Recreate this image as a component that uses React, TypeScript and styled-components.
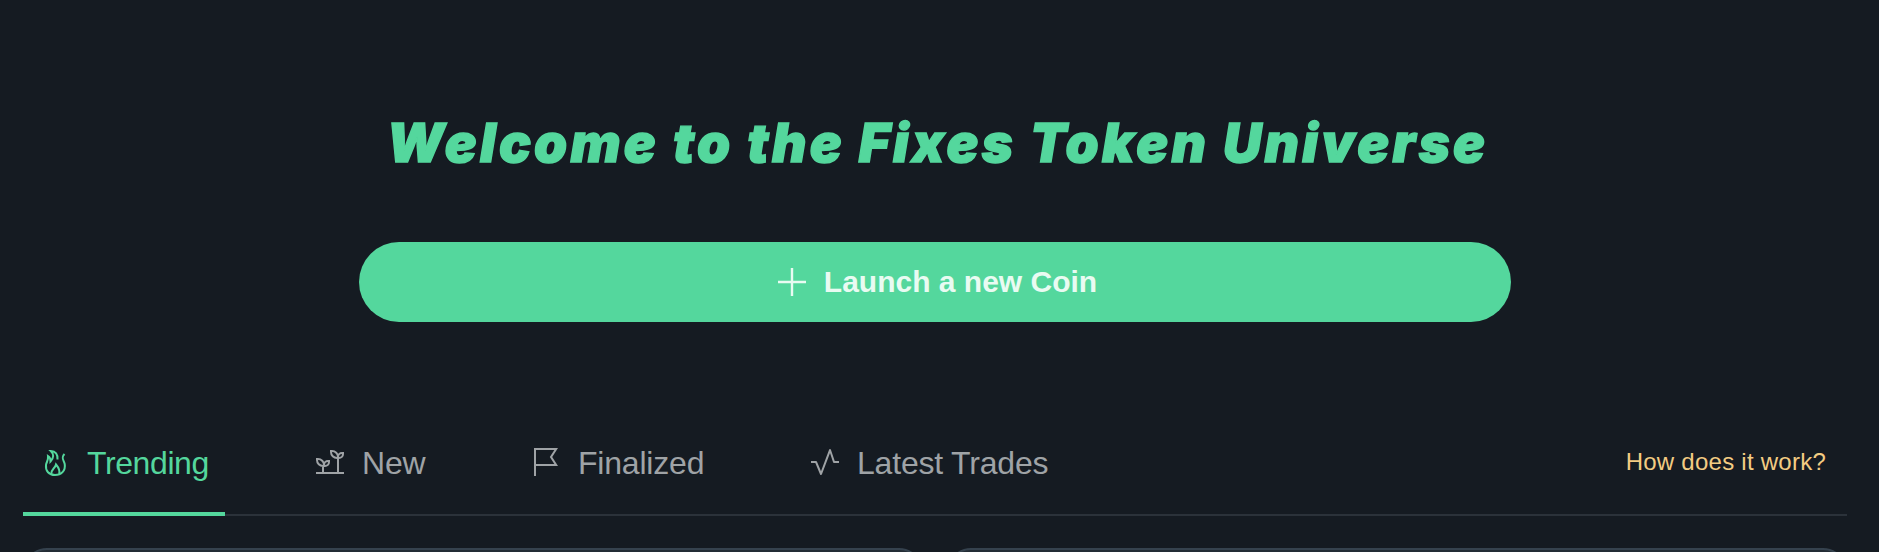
import React from "react";
import styled, { createGlobalStyle } from "styled-components";

const GlobalStyle = createGlobalStyle`
  * {
    box-sizing: border-box;
  }
  body {
    margin: 0;
    background: #151b22;
    font-family: "Liberation Sans", Arial, sans-serif;
  }
`;

const Page = styled.main`
  height: 552px;
  overflow: hidden;
  background: #151b22;
`;

const Hero = styled.section`
  display: flex;
  flex-direction: column;
  align-items: center;
  padding-right: 9px;
`;

const Title = styled.h1`
  margin: 107px 0 0 5px;
  height: 72px;
  line-height: 72px;
  font-family: Inter, sans-serif;
  font-size: 53px;
  font-weight: 900;
  font-style: italic;
  letter-spacing: 3.3px;
  white-space: nowrap;
  color: #54d79d;
  -webkit-text-stroke: 1.4px #54d79d;
`;

const LaunchButton = styled.button`
  display: flex;
  justify-content: center;
  align-items: center;
  gap: 16px;
  width: 1152px;
  height: 80px;
  margin-top: 63px;
  padding: 0 0 0 3px;
  border: 0;
  border-radius: 40px;
  background: #54d79d;
  color: #e9fbf2;
  font-family: inherit;
  font-size: 30px;
  font-weight: 700;
`;

const Icon = styled.svg`
  display: block;
  flex: none;
  width: 32px;
  height: 32px;
  fill: currentColor;
`;

const TabBar = styled.nav`
  display: flex;
  height: 96px;
  margin: 98px 32px 0 23px;
  box-shadow: inset 0 -2px #2b323a;
`;

const Tab = styled.button<{ $active?: boolean; $width: number; $gap?: number }>`
  display: flex;
  align-items: center;
  gap: 16px;
  flex: none;
  width: ${({ $width }) => $width}px;
  margin-right: ${({ $gap = 73 }) => $gap}px;
  padding: 0 0 6px 16px;
  border: 0;
  border-bottom: 4px solid ${({ $active }) => ($active ? "#54d79d" : "transparent")};
  background: none;
  color: ${({ $active }) => ($active ? "#54d79d" : "#9fa3a6")};
  font-family: inherit;
  font-size: 32px;
  letter-spacing: ${({ $active }) => ($active ? "-0.4px" : "-0.2px")};
  white-space: nowrap;

  ${Icon} {
    margin-bottom: 2px;
  }
`;

const HelpLink = styled.a`
  margin-left: auto;
  padding: 28px 21px 0 0;
  font-size: 24px;
  letter-spacing: 0.25px;
  line-height: 28px;
  color: #f3cc82;
`;

const Cards = styled.div`
  display: grid;
  grid-template-columns: 1fr 1fr;
  gap: 24px;
  margin: 32px 32px 0 23px;
`;

const Card = styled.article`
  height: 240px;
  border: 2px solid #35424e;
  border-radius: 24px;
  background: #232c35;
`;

const icons = {
  add: "M17.200 14.800V2h-2.400v12.800H2v2.400h12.800V30h2.400V17.200H30v-2.400z",
  flag: "M6 30H4V2h24l-5.8 9L28 20H6zm0-12h18.33L19.8 11l4.53-7H6z",
  activity:
    "M12 29a1 1 0 0 1-.92-.62L6.33 17H2v-2h5a1 1 0 0 1 .92.62L12 25.28l8.06-21.63A1 1 0 0 1 21 3a1 1 0 0 1 .93.68L25.72 15H30v2h-5a1 1 0 0 1-.95-.68L21 7l-8.06 21.35A1 1 0 0 1 12 29z",
};

const Fire = () => (
  <Icon viewBox="0 0 32 32">
    <g fill="none" stroke="currentColor" strokeWidth="2">
      <path d="M25.500 8c-4 4-.5 6.500.2 10 1.200 7-3.700 11-9.700 11s-9.700-4-9-10c.4-3 2.500-4.500 2-9 2 1.200 2.600 3 2.500 5.500 3.500-3.500 3.500-7.500.3-10.500 4.700 0 7.200 3.500 6.700 8.500" />
      <path d="M12.500 28c-1-4.500 3.500-5 4.500-9.500 2.500 3 4.500 6 3 9.500" />
    </g>
  </Icon>
);

const Sprouts = () => (
  <Icon viewBox="0 0 32 32">
    <path d="M2 26h28v2H2z" />
    <g fill="none" stroke="currentColor" strokeWidth="2">
      <path d="M9 27v-8M9 20a6 6 0 0 1-6-6v-1h1a6 6 0 0 1 6 6v1zM10 20v-1a4 4 0 0 1 4-4h1v1a4 4 0 0 1-4 4z" />
      <path d="M24 27V11M24 12h-1a6 6 0 0 1-6-6V5h1a6 6 0 0 1 6 6zM24 12v-1a4 4 0 0 1 4-4h1v1a4 4 0 0 1-4 4z" />
    </g>
  </Icon>
);

const Glyph = ({ name }: { name: keyof typeof icons }) => (
  <Icon viewBox="0 0 32 32">
    <path d={icons[name]} />
  </Icon>
);

const App = () => {
  return (
    <Page>
      <GlobalStyle />
      <Hero>
        <Title>Welcome to the Fixes Token Universe</Title>
        <LaunchButton>
          <Glyph name="add" />
          Launch a new Coin
        </LaunchButton>
      </Hero>
      <TabBar>
        <Tab $active $width={202}>
          <Fire />
          Trending
        </Tab>
        <Tab $width={143}>
          <Sprouts />
          New
        </Tab>
        <Tab $width={206}>
          <Glyph name="flag" />
          Finalized
        </Tab>
        <Tab $width={256} $gap={0}>
          <Glyph name="activity" />
          Latest Trades
        </Tab>
        <HelpLink>How does it work?</HelpLink>
      </TabBar>
      <Cards>
        <Card />
        <Card />
      </Cards>
    </Page>
  );
};

export default App;
